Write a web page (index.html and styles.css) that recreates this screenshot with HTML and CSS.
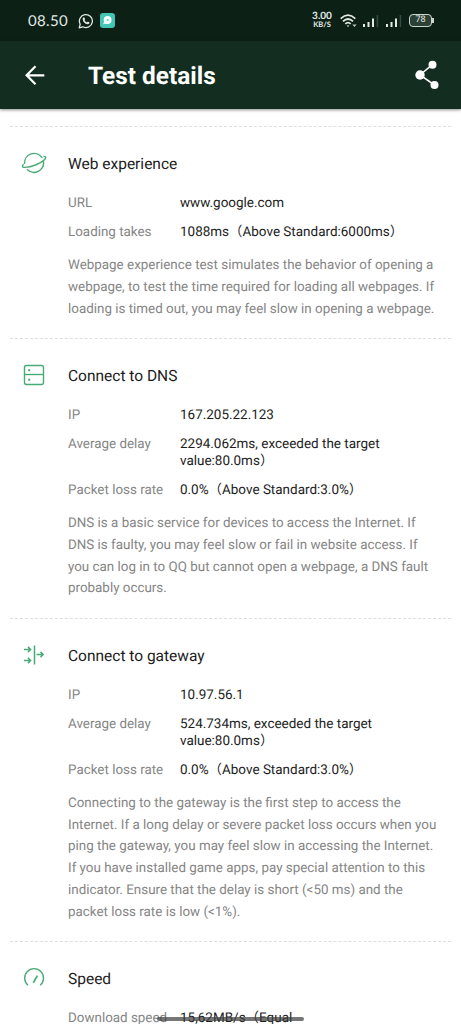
FILE: index.html
```html
<!DOCTYPE html>
<html lang="en">
<head>
<meta charset="utf-8">
<meta name="viewport" content="width=device-width, initial-scale=1">
<title>Test details</title>
<link rel="stylesheet" href="styles.css">
</head>
<body>
<div class="screen">
  <div class="statusbar">
    <span class="clock">08.50</span>
    <svg class="whatsapp" width="16" height="16" viewBox="0 0 16 16" fill="none" stroke="#dfe8e2">
      <path d="M1.2 14.8 2.2 11.2A6.5 6.5 0 1 1 4.8 13.8Z" stroke-width="1.3" stroke-linejoin="round"/>
      <path d="M5.3 4.6 6.4 4.4 7.2 6.2 6.5 7.1Q7.3 8.7 8.9 9.4L9.8 8.6 11.6 9.5Q11.4 11.4 9.6 11.3 5.2 10.4 4.7 6.2 4.7 5 5.3 4.6Z" fill="#dfe8e2" stroke="none"/>
    </svg>
    <svg class="chat" width="15" height="15" viewBox="0 0 15 15">
      <rect width="15" height="15" rx="3.2" fill="#43c6b4"/>
      <circle cx="7.6" cy="7" r="3.9" fill="#f2fffc"/>
      <path d="M4.6 8 3 11.2 7 10.5Z" fill="#f2fffc"/>
      <circle cx="7.6" cy="7" r="1" fill="#69cdbf"/>
    </svg>
    <div class="netspeed"><span>3.00</span><span class="unit">KB/S</span></div>
    <svg class="wifi" width="18" height="14" viewBox="0 0 18 14" fill="none" stroke="#e4ebe6" stroke-width="1.7">
      <path d="M.7 4.6Q8 -2.2 15.3 4.6M3 7.3Q8 2.7 13 7.3M5.3 9.9Q8 7.4 10.7 9.9"/>
      <path d="M6.6 11.4H9.4L8 13.1Z" fill="#e4ebe6" stroke="none"/>
      <path d="M12.4 10.5H16.6L14.5 13Z" fill="#bfcac3" stroke="none"/>
    </svg>
    <svg class="signal" width="16" height="14" viewBox="0 0 16 14" fill="#e4ebe6">
      <path d="M0 10h2v3H0zM4.5 8h2v5h-2zM9 4.5h2V13H9z"/><path d="M13.6 1h1.6v12h-1.6z" fill="#344b3e"/>
    </svg>
    <svg class="signal second" width="16" height="14" viewBox="0 0 16 14" fill="#e4ebe6">
      <path d="M0 10h2v3H0zM4.5 8h2v5h-2zM9 4.5h2V13H9z"/><path d="M13.6 1h1.6v12h-1.6z" fill="#344b3e"/>
    </svg>
    <div class="battery">78</div>
  </div>
  <header class="appbar">
    <svg class="back" width="20" height="20" viewBox="0 0 20 20" fill="none" stroke="#fff" stroke-width="2.2">
      <path d="M19.3 10.3H2M10.5 1.2 1.6 10.3 10.5 19.2"/>
    </svg>
    <h1>Test details</h1>
    <svg class="share" width="24" height="30" viewBox="0 0 24 30" fill="#fff">
      <path d="M17.5 4.5 5 15 19.5 25" fill="none" stroke="#fff" stroke-width="1.6"/>
      <circle cx="17.5" cy="4.8" r="4"/><circle cx="5" cy="15" r="4.7"/><circle cx="19.5" cy="25" r="4"/>
    </svg>
  </header>
  <main>
    <section>
      <svg class="icon" width="26" height="24" viewBox="0 0 26 24" fill="none" stroke="#48ab77" stroke-width="1.4" stroke-linecap="round">
        <path d="M3.5 12.4A9.6 9.6 0 0 1 21 6.6"/>
        <path d="M23 5.4Q25.3 5.6 24.4 7.4C21.8 12 9.5 16.8 2.6 16.3Q.5 15.8 2.2 13.6"/>
        <path d="M22.5 10.6A9.6 9.6 0 0 1 6.4 18.7"/>
      </svg>
      <div class="body">
        <h2>Web experience</h2>
        <dl>
          <dt>URL</dt><dd>www.google.com</dd>
          <dt>Loading takes</dt><dd>1088ms（Above Standard:6000ms）</dd>
        </dl>
        <p>Webpage experience test simulates the behavior of opening a<br>webpage, to test the time required for loading all webpages. If<br>loading is timed out, you may feel slow in opening a webpage.</p>
      </div>
    </section>
    <section>
      <svg class="icon" width="26" height="24" viewBox="0 0 26 24" fill="none" stroke="#48ab77" stroke-width="1.4">
        <rect x="3.5" y="2.5" width="19" height="19" rx="2"/>
        <path d="M3.5 11.5h19"/>
        <path d="M7.2 6.3h2v2h-2zM7.2 15.8h2v2h-2z" fill="#48ab77" stroke="none"/>
      </svg>
      <div class="body">
        <h2>Connect to DNS</h2>
        <dl>
          <dt>IP</dt><dd>167.205.22.123</dd>
          <dt>Average delay</dt><dd>2294.062ms, exceeded the target<br>value:80.0ms）</dd>
          <dt>Packet loss rate</dt><dd>0.0%（Above Standard:3.0%）</dd>
        </dl>
        <p>DNS is a basic service for devices to access the Internet. If<br>DNS is faulty, you may feel slow or fail in website access. If<br>you can log in to QQ but cannot open a webpage, a DNS fault<br>probably occurs.</p>
      </div>
    </section>
    <section>
      <svg class="icon" width="26" height="24" viewBox="0 0 26 24" fill="none" stroke="#48ab77" stroke-width="1.5">
        <path d="M13.5 2.5v19"/>
        <path d="M3 6.5h6.5M7 3.9 9.6 6.5 7 9.1M3 17.5h6.5M7 14.9 9.6 17.5 7 20.1M15.5 11.5H22M19.5 8.9 22.1 11.5 19.5 14.1"/>
      </svg>
      <div class="body">
        <h2>Connect to gateway</h2>
        <dl>
          <dt>IP</dt><dd>10.97.56.1</dd>
          <dt>Average delay</dt><dd>524.734ms, exceeded the target<br>value:80.0ms）</dd>
          <dt>Packet loss rate</dt><dd>0.0%（Above Standard:3.0%）</dd>
        </dl>
        <p>Connecting to the gateway is the first step to access the<br>Internet. If a long delay or severe packet loss occurs when you<br>ping the gateway, you may feel slow in accessing the Internet.<br>If you have installed game apps, pay special attention to this<br>indicator. Ensure that the delay is short (&lt;50 ms) and the<br>packet loss rate is low (&lt;1%).</p>
      </div>
    </section>
    <section>
      <svg class="icon" width="26" height="24" viewBox="0 0 26 24" fill="none" stroke="#48ab77" stroke-width="1.4">
        <path d="M7 19.2A9.4 9.4 0 1 1 19.2 19.2"/><path d="M12.3 16.7 16.4 9.6" stroke-width="1.7"/>
      </svg>
      <div class="body">
        <h2>Speed</h2>
        <dl>
          <dt>Download speed</dt><dd>15,62MB/s（Equal</dd>
        </dl>
      </div>
    </section>
  </main>
  <div class="gesture"></div>
</div>
</body>
</html>
```
FILE: styles.css
```css
* { box-sizing: border-box; }
body { margin: 0; background: #fff; font-family: Roboto, "Noto Sans CJK SC", sans-serif; text-rendering: geometricPrecision; }
.screen { position: relative; width: 461px; height: 1024px; overflow: hidden; }
.statusbar { display: flex; align-items: center; height: 41px; padding: 0 28px; background: #0c2016; color: #e4ebe6; }
.clock { width: 41px; font: 400 15px/20px Lato, sans-serif; letter-spacing: .35px; white-space: nowrap; }
.whatsapp { margin-left: 9px; }
.chat { margin-left: 6px; }
.netspeed { display: flex; flex-direction: column; align-items: center; width: 22px; margin-left: 196px; font: 700 10px/9px Lato, sans-serif; white-space: nowrap; }
.netspeed .unit { font-size: 7.5px; line-height: 8px; }
.wifi { margin-left: 7px; }
.signal { margin-left: 5px; }
.signal.second { margin-left: 7px; }
.battery { position: relative; width: 23px; height: 13px; margin-left: 7px; border: 1.5px solid #cbd5ce; border-radius: 4px; background: #2c4135; font-size: 9px; line-height: 11px; text-align: center; }
.battery::after { content: ""; position: absolute; right: -3px; top: 3px; width: 2px; height: 5px; background: #cbd5ce; }
.appbar { display: flex; align-items: center; height: 68px; padding: 0 22px 0 25px; background: #132e20; box-shadow: 0 1px 3px rgba(0, 0, 0, .45); }
h1 { flex: 1; margin: 2px 0 0 43px; color: #fff; font-size: 24.4px; line-height: 30px; font-weight: 700; }
main { padding: 17px 10px 0; }
section { display: flex; align-items: flex-start; padding: 27px 0 17.5px 11px; border-top: 1px dashed #dfdfdf; }
.icon { flex: none; margin-top: -3px; }
.body { margin-left: 21px; white-space: nowrap; }
h2 { margin: 0 0 21.3px; color: #1c1c1c; font-size: 15.5px; line-height: 20px; font-weight: 400; }
dl { display: grid; grid-template-columns: 112px auto; row-gap: 11.5px; margin: 0 0 13.4px; font-size: 13.4px; line-height: 17.4px; }
dt { color: #858585; }
dd { margin: 0; color: #1c1c1c; font-size: 13.48px; }
p { margin: 0; color: #858585; font-size: 13.4px; line-height: 21.75px; }
.gesture { position: absolute; left: 157px; top: 1017px; width: 147px; height: 4px; border-radius: 2px; background: rgba(60, 60, 60, .7); }
```
